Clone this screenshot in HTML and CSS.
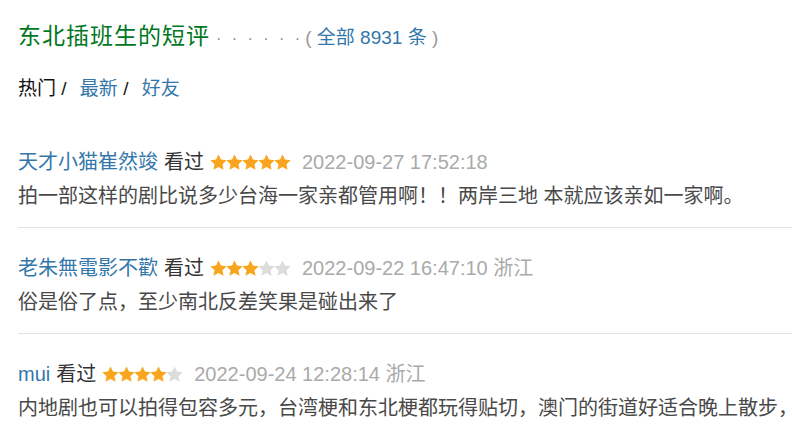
FILE: index.html
```html
<!DOCTYPE html>
<html>
	<head>
		<meta charset="utf-8">
		<title>短评</title>
		<link rel="stylesheet" href="styles.css">
	</head>
	<body>
		<div class="comments">
			<h2 class="title">
				东北插班生的短评<span class="dots">· · · · · ·</span><span class="count">( <a href="javascript:;">全部 8931 条</a> )</span>
			</h2>
			<div class="tabs">
				<span class="on">热门</span> / <a href="javascript:;">最新</a> / <a href="javascript:;">好友</a>
			</div>

			<div class="item">
				<div class="meta">
					<a href="javascript:;">天才小猫崔然竣</a>
					<span class="seen">看过</span>
					<span class="stars" data-n="5"></span>
					<span class="time">2022-09-27 17:52:18</span>
				</div>
				<p class="short">拍一部这样的剧比说多少台海一家亲都管用啊！！两岸三地 本就应该亲如一家啊。</p>
			</div>

			<div class="item">
				<div class="meta">
					<a href="javascript:;">老朱無電影不歡</a>
					<span class="seen">看过</span>
					<span class="stars" data-n="3"></span>
					<span class="time">2022-09-22 16:47:10 浙江</span>
				</div>
				<p class="short">俗是俗了点，至少南北反差笑果是碰出来了</p>
			</div>

			<div class="item">
				<div class="meta">
					<a href="javascript:;">mui</a>
					<span class="seen">看过</span>
					<span class="stars" data-n="4"></span>
					<span class="time">2022-09-24 12:28:14 浙江</span>
				</div>
				<p class="short">内地剧也可以拍得包容多元，台湾梗和东北梗都玩得贴切，澳门的街道好适合晚上散步，好</p>
			</div>
		</div>
		<script type="text/javascript">
			//画星星
			var star = '<svg viewBox="0 0 24 24" width="17" height="17"><path d="M12 .6l3.5 7.3 8 .9-5.9 5.5 1.6 7.9L12 18.3l-7.2 3.9 1.6-7.9L.5 8.8l8-.9z"/></svg>';
			var boxes = document.querySelectorAll(".stars");
			for (var i = 0; i < boxes.length; i++) {
				var n = +boxes[i].getAttribute("data-n");
				var html = "";
				for (var j = 0; j < 5; j++) {
					html += '<i class="' + (j < n ? "full" : "empty") + '">' + star + '</i>';
				}
				boxes[i].innerHTML = html;
			}
		</script>
	</body>
</html>
```

FILE: styles.css
```css
* {
  padding: 0;
  margin: 0;
}

body {
  background: #fff;
  font-family: "Liberation Sans", "Noto Sans CJK SC", sans-serif;
  color: #111;
  overflow: hidden;
}

a {
  color: #3377aa;
  text-decoration: none;
}

.comments {
  padding: 20px 0 0 18px;
}

.title {
  font-size: 23px;
  font-weight: normal;
  color: #007722;
  line-height: 32px;
  letter-spacing: 1px;
  white-space: nowrap;
}

.title .dots {
  font-size: 16px;
  color: #888;
  letter-spacing: 3px;
  margin-left: 6px;
}

.title .count {
  font-size: 19px;
  color: #999;
  letter-spacing: 0;
  margin-left: 2px;
}

.title .count a {
  color: #3377aa;
}

.tabs {
  margin-top: 22px;
  font-size: 19px;
  line-height: 24px;
  color: #111;
}

.tabs a {
  margin-left: 8px;
}

.item {
  margin-top: 48px;
  padding-bottom: 17px;
  border-bottom: 1px solid #e3e3e3;
}

.item + .item {
  margin-top: 0;
  padding-top: 27px;
}

.meta {
  display: flex;
  align-items: center;
  gap: 6px;
  font-size: 20px;
  line-height: 26px;
  white-space: nowrap;
}

.meta .seen {
  color: #333;
}

.stars {
  display: flex;
}

.stars i {
  display: block;
  width: 16px;
  height: 17px;
}

.stars svg {
  display: block;
}

.stars .full {
  fill: #f9a51e;
}

.stars .empty {
  fill: #dcdcdc;
}

.meta .time {
  color: #aaa;
  margin-left: 6px;
}

.short {
  margin-top: 7px;
  font-size: 20px;
  line-height: 28px;
  color: #494949;
  white-space: nowrap;
}
```
